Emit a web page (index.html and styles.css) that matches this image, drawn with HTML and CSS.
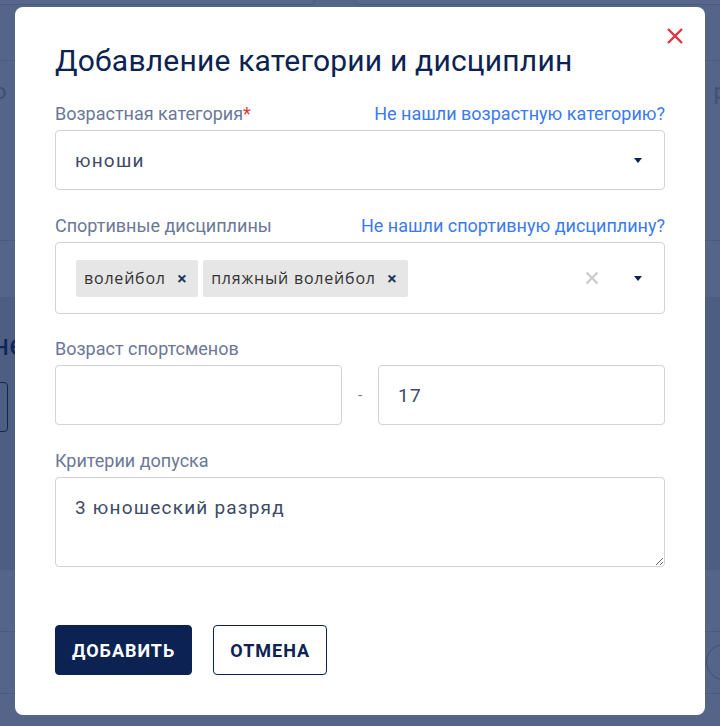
FILE: index.html
```html
<!DOCTYPE html>
<html lang="ru">
<head>
    <meta charset="UTF-8">
    <meta name="viewport" content="width=device-width, initial-scale=1.0">
    <title>Добавление категории и дисциплин</title>
    <link rel="stylesheet" href="styles.css">
</head>
<body>
    <!-- страница под модальным окном -->
    <div class="backdrop">
        <div class="bg-cards">
            <div class="bg-card bg-card-left"></div>
            <div class="bg-card bg-card-right"></div>
        </div>
        <div class="bg-header"></div>
        <div class="bg-row">
            <span class="bg-text">о</span>
            <span class="bg-text">р</span>
        </div>
        <div class="bg-tabs"></div>
        <div class="bg-section">
            <div class="bg-heading">не</div>
            <div class="bg-button"></div>
        </div>
        <div class="bg-line"></div>
        <div class="bg-line bg-line-ring">
            <span class="bg-ring"></span>
        </div>
        <div class="bg-bottom"></div>
    </div>

    <div class="overlay">
        <div class="modal">
            <button class="modal-close" type="button" aria-label="Закрыть">
                <svg width="18" height="18" viewBox="0 0 18 18">
                    <path d="M2 2 L16 16 M16 2 L2 16" stroke="#e5323c" stroke-width="2.4" fill="none"/>
                </svg>
            </button>

            <h2 class="modal-title">Добавление категории и дисциплин</h2>

            <div class="field">
                <div class="field-head">
                    <label class="field-label">Возрастная категория<span class="required">*</span></label>
                    <a class="field-link" href="#">Не нашли возрастную категорию?</a>
                </div>
                <div class="select">
                    <span class="select-value">юноши</span>
                    <span class="select-arrow"></span>
                </div>
            </div>

            <div class="field field-multi">
                <div class="field-head">
                    <label class="field-label">Спортивные дисциплины</label>
                    <a class="field-link" href="#">Не нашли спортивную дисциплину?</a>
                </div>
                <div class="select select-multi">
                    <div class="tags">
                        <span class="tag">волейбол <span class="tag-remove">×</span></span>
                        <span class="tag">пляжный волейбол <span class="tag-remove">×</span></span>
                    </div>
                    <span class="select-clear">
                        <svg width="14" height="14" viewBox="0 0 14 14">
                            <path d="M1.5 1.5 L12.5 12.5 M12.5 1.5 L1.5 12.5" stroke="#cccccc" stroke-width="2.4" fill="none"/>
                        </svg>
                    </span>
                    <span class="select-arrow"></span>
                </div>
            </div>

            <div class="field">
                <div class="field-head">
                    <label class="field-label">Возраст спортсменов</label>
                </div>
                <div class="range">
                    <input class="input" type="text" value="">
                    <span class="range-dash">-</span>
                    <input class="input" type="text" value="17">
                </div>
            </div>

            <div class="field">
                <div class="field-head">
                    <label class="field-label">Критерии допуска</label>
                </div>
                <textarea class="input textarea">3 юношеский разряд</textarea>
            </div>

            <div class="actions">
                <button class="btn btn-primary" type="button">Добавить</button>
                <button class="btn btn-outline" type="button">Отмена</button>
            </div>
        </div>
    </div>
</body>
</html>
```

FILE: styles.css
```css
* {
    box-sizing: border-box;
}
body {
    margin: 0;
    font-family: Roboto, "Liberation Sans", sans-serif;
    background-color: #55658a;
    overflow: hidden;
}

/* фон */
.backdrop {
    height: 726px;
    color: #0d2454;
}
.bg-cards {
    display: flex;
    justify-content: space-between;
    height: 5px;
}
.bg-card {
    height: 5px;
    background-color: #57678b;
    border: 1px solid #4a5a7e;
    border-top: none;
}
.bg-card-left {
    width: 315px;
    border-left: none;
    border-radius: 0 0 5px 0;
}
.bg-card-right {
    width: 365px;
    border-right: none;
    border-radius: 0 0 0 5px;
}
.bg-header {
    height: 55px;
    background-color: #55658a;
}
.bg-row {
    height: 180px;
    border-top: 1px solid #4a5a7e;
    display: flex;
    justify-content: space-between;
    padding-top: 18px;
    font-size: 22px;
    color: #3f4f74;
    background-color: #55658a;
}
.bg-text {
    margin: 0 -6px;
}
.bg-tabs {
    height: 57px;
    border-top: 1px solid #4a5a7e;
    background-color: #55658a;
}
.bg-section {
    height: 273px;
    background-color: #4e5e82;
    padding-top: 30px;
}
.bg-heading {
    font-size: 30px;
    margin-left: -8px;
    color: #0e2656;
}
.bg-button {
    width: 16px;
    height: 50px;
    margin-top: 20px;
    margin-left: -8px;
    border: 1px solid #0e2656;
    border-radius: 4px;
}
.bg-line {
    height: 62px;
    background-color: #55658a;
    border-bottom: 1px solid #4a5a7e;
}
.bg-line-ring {
    position: relative;
}
.bg-ring {
    position: absolute;
    right: -22px;
    top: 12px;
    width: 36px;
    height: 36px;
    border: 1px solid #3f4f74;
    border-radius: 50%;
}
.bg-bottom {
    height: 40px;
    background-color: #55658a;
}

/* модальное окно */
.overlay {
    position: fixed;
    top: 0;
    left: 0;
    right: 0;
    bottom: 0;
    padding-top: 7px;
}
.modal {
    position: relative;
    width: 690px;
    margin: 0 auto;
    background-color: #fff;
    border-radius: 8px;
    padding: 35px 40px 40px;
}
.modal-close {
    position: absolute;
    top: 18px;
    right: 19px;
    width: 22px;
    height: 22px;
    padding: 2px;
    background: none;
    border: none;
    cursor: pointer;
}
.modal-title {
    margin: 0 0 24px;
    font-size: 30px;
    line-height: 38px;
    font-weight: 400;
    letter-spacing: 0.2px;
    color: #0c2352;
}
.field {
    margin-bottom: 26px;
}
.field-multi {
    margin-bottom: 25px;
}
.field-head {
    display: flex;
    justify-content: space-between;
    align-items: baseline;
    margin-bottom: 6px;
    font-size: 18px;
    line-height: 20px;
}
.field-label {
    color: #6b7897;
}
.required {
    color: #e5323c;
}
.field-link {
    color: #3a7af2;
    text-decoration: none;
}
.select {
    display: flex;
    align-items: center;
    height: 60px;
    padding: 0 22px 0 19px;
    border: 1px solid #cfd3da;
    border-radius: 4px;
}
.select-value {
    flex: 1;
    font-size: 19px;
    letter-spacing: 1.2px;
    color: #3d4a68;
}
.select-arrow {
    width: 0;
    height: 0;
    border-left: 4.5px solid transparent;
    border-right: 4.5px solid transparent;
    border-top: 5px solid #0c2352;
}
.select-multi {
    height: 72px;
    padding-left: 20px;
}
.tags {
    flex: 1;
    display: flex;
    gap: 5px;
}
.tag {
    display: flex;
    align-items: center;
    height: 37px;
    padding: 0 11px 0 8px;
    background-color: #e6e6e6;
    border-radius: 2px;
    font-family: "Open Sans", sans-serif;
    font-size: 16px;
    letter-spacing: 0.8px;
    color: #333;
}
.tag-remove {
    margin-left: 11px;
    font-weight: 700;
    font-size: 18px;
    letter-spacing: 0;
    color: #1d3461;
}
.select-clear {
    display: flex;
    margin-right: 35px;
}
.range {
    display: flex;
    align-items: center;
}
.input {
    width: 287px;
    height: 60px;
    padding: 0 19px;
    border: 1px solid #cfd3da;
    border-radius: 4px;
    font-family: Roboto, sans-serif;
    font-size: 19px;
    letter-spacing: 1.2px;
    color: #3d4a68;
    outline: none;
}
.range-dash {
    flex: 1;
    text-align: center;
    color: #6b7897;
    font-size: 15px;
}
.textarea {
    display: block;
    width: 100%;
    height: 90px;
    padding: 16px 19px;
    line-height: 27px;
    resize: vertical;
}
.actions {
    display: flex;
    gap: 20px;
    margin-top: 58px;
}
.btn {
    height: 50px;
    padding: 0 16px;
    border-radius: 4px;
    font-family: Roboto, sans-serif;
    font-size: 18px;
    font-weight: 700;
    letter-spacing: 1px;
    text-transform: uppercase;
    cursor: pointer;
}
.btn-primary {
    background-color: #0b2252;
    border: 1px solid #0b2252;
    color: #fff;
}
.btn-outline {
    margin-left: 1px;
    background-color: #fff;
    border: 1px solid #0b2252;
    color: #0b2252;
}
```
